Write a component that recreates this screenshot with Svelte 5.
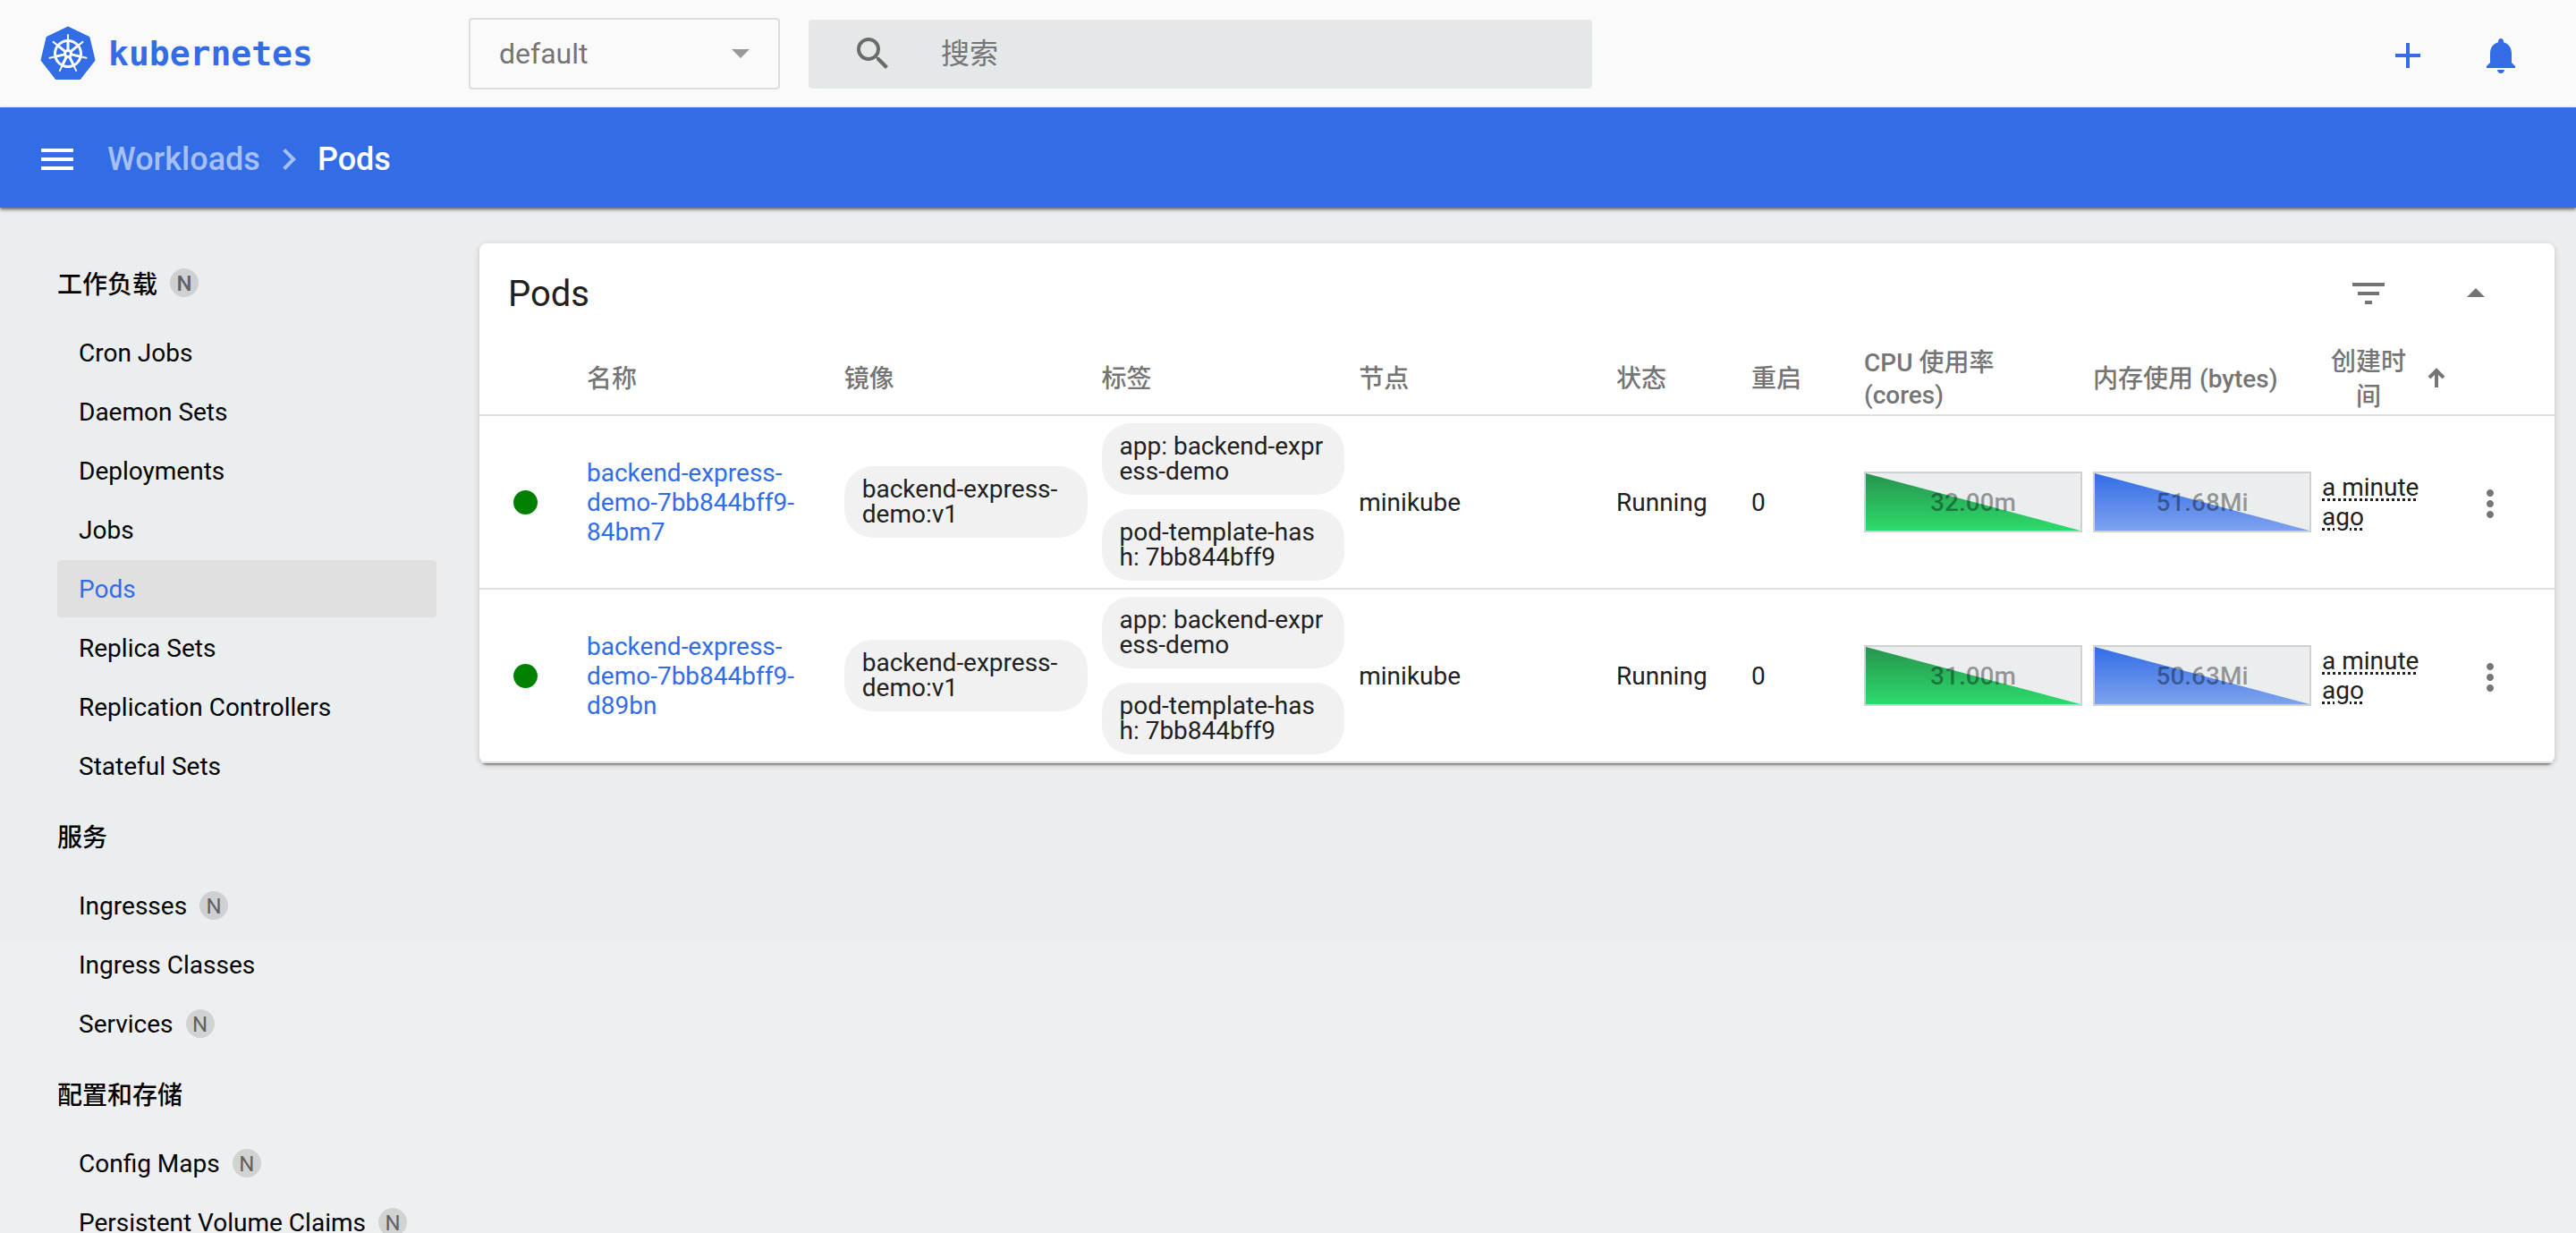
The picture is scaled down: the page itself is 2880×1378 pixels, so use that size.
<script>
  const groups = [
    {
      title: '工作负载',
      badge: true,
      items: [
        { name: 'Cron Jobs' },
        { name: 'Daemon Sets' },
        { name: 'Deployments' },
        { name: 'Jobs' },
        { name: 'Pods', active: true },
        { name: 'Replica Sets' },
        { name: 'Replication Controllers' },
        { name: 'Stateful Sets' },
      ],
    },
    {
      title: '服务',
      items: [
        { name: 'Ingresses', badge: true },
        { name: 'Ingress Classes' },
        { name: 'Services', badge: true },
      ],
    },
    {
      title: '配置和存储',
      items: [
        { name: 'Config Maps', badge: true },
        { name: 'Persistent Volume Claims', badge: true },
      ],
    },
  ];

  const pods = [
    { name: 'backend-express-demo-7bb844bff9-84bm7', cpu: '32.00m', memory: '51.68Mi' },
    { name: 'backend-express-demo-7bb844bff9-d89bn', cpu: '31.00m', memory: '50.63Mi' },
  ];
  const labels = ['app: backend-express-demo', 'pod-template-hash: 7bb844bff9'];

  const spokes = [0, 1, 2, 3, 4, 5, 6].map((i) => (i * 360) / 7);
</script>

{#snippet spark(value, kind)}
  <div class="spark">
    <svg viewBox="0 0 240 64" preserveAspectRatio="none" aria-hidden="true">
      <defs>
        <linearGradient id="fill-{kind}" x1="0" y1="0" x2="0" y2="1">
          <stop offset="0" class="{kind}-top" />
          <stop offset="1" class="{kind}-bottom" />
        </linearGradient>
      </defs>
      <polygon points="0,0 240,64 0,64" fill="url(#fill-{kind})" />
    </svg>
    <span>{value}</span>
  </div>
{/snippet}

<div class="page">
  <header class="topbar">
    <a class="brand" href="#home" aria-label="kubernetes">
      <svg class="wheel" viewBox="-32 -32 64 64" aria-hidden="true">
        <path
          d="M0 -29 L23 -18 L29 7 L13 27.5 L-13 27.5 L-29 7 L-23 -18 Z"
          fill="#326de6"
          stroke="#fff"
          stroke-width="6"
          stroke-linejoin="round"
        />
        <path
          d="M0 -29 L23 -18 L29 7 L13 27.5 L-13 27.5 L-29 7 L-23 -18 Z"
          fill="#326de6"
          stroke="#326de6"
          stroke-width="3"
          stroke-linejoin="round"
        />
        <g fill="none" stroke="#fff" stroke-linecap="round">
          <circle r="14.5" stroke-width="3" />
          {#each spokes as angle}
            <g transform="rotate({angle})">
              <path d="M0 -4V-21" stroke-width="2" />
              <path d="M0 -5V-13" stroke-width="3" />
            </g>
          {/each}
        </g>
        <circle r="5" fill="#fff" />
        <circle r="2" fill="#326de6" />
      </svg>
      <span>kubernetes</span>
    </a>

    <div class="namespace">
      <select aria-label="Namespace">
        <option>default</option>
      </select>
      <svg viewBox="0 0 20 10" aria-hidden="true"><path d="M0 0h20L10 10z" /></svg>
    </div>

    <label class="search">
      <svg class="icon" viewBox="0 0 24 24" aria-hidden="true">
        <path d="M15.5 14h-.79l-.28-.27A6.471 6.471 0 0 0 16 9.5 6.5 6.5 0 1 0 9.5 16c1.61 0 3.09-.59 4.23-1.57l.27.28v.79l5 4.99L20.49 19l-4.99-5zm-6 0C7.01 14 5 11.99 5 9.5S7.01 5 9.5 5 14 7.01 14 9.5 11.99 14 9.5 14z" />
      </svg>
      <input type="text" placeholder="搜索" aria-label="搜索" />
    </label>

    <div class="tools">
      <button aria-label="Create">
        <svg class="icon" viewBox="0 0 24 24"><path d="M19 13h-6v6h-2v-6H5v-2h6V5h2v6h6v2z" /></svg>
      </button>
      <button aria-label="Notifications">
        <svg class="icon" viewBox="0 0 24 24">
          <path d="M12 22c1.1 0 2-.9 2-2h-4c0 1.1.89 2 2 2zm6-6v-5c0-3.07-1.64-5.64-4.5-6.32V4c0-.83-.67-1.5-1.5-1.5s-1.5.67-1.5 1.5v.68C7.63 5.36 6 7.92 6 11v5l-2 2v1h16v-1l-2-2z" />
        </svg>
      </button>
    </div>
  </header>

  <nav class="crumbs" aria-label="Breadcrumb">
    <button aria-label="Menu">
      <svg class="icon" viewBox="0 0 24 24"><path d="M3 18h18v-2H3v2zm0-5h18v-2H3v2zm0-7v2h18V6H3z" /></svg>
    </button>
    <a href="#workloads">Workloads</a>
    <svg class="icon chevron" viewBox="0 0 24 24" aria-hidden="true">
      <path d="M10 6L8.59 7.41 13.17 12l-4.58 4.59L10 18l6-6z" />
    </svg>
    <strong>Pods</strong>
  </nav>

  <div class="body">
    <nav class="sidebar" aria-label="Resources">
      {#each groups as group}
        <a class="group" href="#group">
          {group.title}
          {#if group.badge}<span class="badge">N</span>{/if}
        </a>
        {#each group.items as item}
          <a class="item" class:active={item.active} href="#resource">
            {item.name}
            {#if item.badge}<span class="badge">N</span>{/if}
          </a>
        {/each}
      {/each}
    </nav>

    <main>
      <section class="card">
        <div class="card-head">
          <h1>Pods</h1>
          <button aria-label="Filter">
            <svg class="icon" viewBox="0 0 24 24"><path d="M10 18h4v-2h-4v2zM3 6v2h18V6H3zm3 7h12v-2H6v2z" /></svg>
          </button>
          <button aria-label="Collapse">
            <svg class="icon" viewBox="0 0 24 24"><path d="M7 14l5-5 5 5z" /></svg>
          </button>
        </div>
        <table>
          <colgroup>
            <col class="c-dot" />
            <col />
            <col />
            <col />
            <col />
            <col class="c-status" />
            <col class="c-restarts" />
            <col class="c-metric" />
            <col class="c-metric" />
            <col class="c-created" />
            <col class="c-menu" />
          </colgroup>
          <thead>
            <tr>
              <th></th>
              <th>名称</th>
              <th>镜像</th>
              <th>标签</th>
              <th>节点</th>
              <th>状态</th>
              <th>重启</th>
              <th>CPU 使用率 (cores)</th>
              <th>内存使用 (bytes)</th>
              <th>
                <button class="sort">
                  <span>创建时间</span>
                  <svg viewBox="0 0 20 26" aria-hidden="true">
                    <path d="M10 22V3M2 11L10 3L18 11" />
                  </svg>
                </button>
              </th>
              <th></th>
            </tr>
          </thead>
          <tbody>
            {#each pods as pod}
              <tr>
                <td class="dot-cell"><span class="dot"></span></td>
                <td><a class="pod" href="#pod">{pod.name}</a></td>
                <td><div class="chip">backend-express-demo:v1</div></td>
                <td>
                  <div class="chips">
                    {#each labels as label}<div class="chip breaking">{label}</div>{/each}
                  </div>
                </td>
                <td>minikube</td>
                <td>Running</td>
                <td>0</td>
                <td class="metric">{@render spark(pod.cpu, 'cpu')}</td>
                <td class="metric">{@render spark(pod.memory, 'memory')}</td>
                <td><span class="ago">a minute ago</span></td>
                <td class="menu-cell">
                  <button aria-label="Actions">
                    <svg class="icon" viewBox="0 0 24 24">
                      <path d="M12 8c1.1 0 2-.9 2-2s-.9-2-2-2-2 .9-2 2 .9 2 2 2zm0 2c-1.1 0-2 .9-2 2s.9 2 2 2 2-.9 2-2-.9-2-2-2zm0 6c-1.1 0-2 .9-2 2s.9 2 2 2 2-.9 2-2-.9-2-2-2z" />
                    </svg>
                  </button>
                </td>
              </tr>
            {/each}
          </tbody>
        </table>
      </section>
    </main>
  </div>
</div>

<style>
  :global(body) {
    margin: 0;
    overflow: hidden;
  }

  .page {
    height: 100vh;
    overflow: hidden;
    display: flex;
    flex-direction: column;
    background: linear-gradient(#eaeeef 1052px, #eeeff0 1052px);
    color: #212121;
    font-family: Roboto, 'Noto Sans CJK SC', sans-serif;
    font-size: 28px;
  }

  button {
    display: flex;
    padding: 0;
    border: 0;
    background: none;
    color: inherit;
    font: inherit;
    cursor: pointer;
  }

  a {
    color: inherit;
    text-decoration: none;
  }

  .icon {
    display: block;
    flex: none;
    width: 48px;
    height: 48px;
    fill: currentColor;
  }

  .topbar {
    flex: none;
    display: flex;
    align-items: center;
    height: 120px;
    padding: 0 60px 0 44px;
    box-sizing: border-box;
    background: #fafafa;
  }

  .brand {
    display: flex;
    align-items: center;
    gap: 13px;
    width: 480px;
    color: #326de6;
    font: bold 38px/44px 'DejaVu Sans Mono', monospace;
  }

  .wheel {
    width: 64px;
    height: 64px;
  }

  .namespace {
    display: grid;
    align-items: center;
    width: 348px;
    height: 80px;
  }

  .namespace select,
  .namespace svg {
    grid-area: 1 / 1;
  }

  .namespace select {
    appearance: none;
    width: 100%;
    height: 100%;
    padding: 0 32px;
    border: 2px solid #dddddd;
    border-radius: 4px;
    background: transparent;
    color: #757575;
    font: 32px Roboto, sans-serif;
  }

  .namespace svg {
    justify-self: end;
    width: 20px;
    height: 10px;
    margin-right: 34px;
    fill: #999999;
    pointer-events: none;
  }

  .search {
    display: flex;
    align-items: center;
    width: 876px;
    height: 77px;
    margin-left: 32px;
    padding: 0 48px;
    box-sizing: border-box;
    border-radius: 4px;
    background: #e4e8e8;
    color: #6b6b6b;
  }

  .search input {
    flex: 1;
    min-width: 0;
    margin-left: 52px;
    padding: 0;
    border: 0;
    outline: 0;
    background: none;
    font: 32px Roboto, 'Noto Sans CJK SC', sans-serif;
  }

  .search input::placeholder {
    color: #757575;
  }

  .tools {
    display: flex;
    gap: 56px;
    margin-left: auto;
    padding-top: 4px;
    color: #326de6;
  }

  .crumbs {
    flex: none;
    display: flex;
    align-items: center;
    height: 112px;
    padding: 4px 40px 0;
    box-sizing: border-box;
    background: #326de6;
    box-shadow: 0 2px 4px rgba(0, 0, 0, 0.6);
    color: #fff;
    font-size: 36px;
    font-weight: 500;
    z-index: 1;
  }

  .crumbs a {
    margin-left: 32px;
    color: #a6bff4;
  }

  .crumbs .chevron {
    margin: 0 8px;
    color: #a6bff4;
  }

  .crumbs strong {
    font-weight: 500;
  }

  .body {
    flex: 1;
    min-height: 0;
    display: flex;
  }

  .sidebar {
    flex: none;
    width: 424px;
    padding: 40px 48px 0 64px;
    color: #000;
  }

  .group,
  .item {
    display: flex;
    align-items: center;
    gap: 14px;
    margin-bottom: 2px;
    white-space: nowrap;
  }

  .group {
    height: 88px;
    font-weight: 500;
  }

  .item {
    height: 64px;
    padding: 0 24px;
    border-radius: 4px;
  }

  .item.active {
    background: #e0e0e0;
    color: #326de6;
  }

  .badge {
    width: 32px;
    height: 32px;
    border-radius: 50%;
    background: rgba(0, 0, 0, 0.12);
    color: #616161;
    font-size: 24px;
    line-height: 34px;
    text-align: center;
  }

  main {
    flex: 1;
    min-width: 0;
    padding: 40px 24px 0 0;
  }

  .card {
    border-radius: 8px;
    background: #fff;
    box-shadow:
      0 4px 2px -2px rgba(0, 0, 0, 0.35),
      0 2px 6px rgba(0, 0, 0, 0.2);
  }

  .card-head {
    display: flex;
    align-items: center;
    gap: 72px;
    height: 112px;
    padding: 0 64px 0 32px;
    box-sizing: border-box;
    color: #757575;
  }

  h1 {
    margin: 0 auto 0 0;
    color: #212121;
    font-size: 40px;
    font-weight: 400;
  }

  table {
    width: 100%;
    table-layout: fixed;
    border-collapse: separate;
    border-spacing: 0;
  }

  .c-dot {
    width: 120px;
  }

  .c-status {
    width: 151px;
  }

  .c-restarts {
    width: 126px;
  }

  .c-metric {
    width: 256px;
  }

  .c-created {
    width: 148px;
  }

  .c-menu {
    width: 112px;
  }

  th,
  td {
    padding: 0 16px 0 0;
    border-bottom: 2px solid #e0e0e0;
    text-align: left;
    vertical-align: middle;
    line-height: 33px;
  }

  th {
    height: 79px;
    color: #757575;
    font-weight: 500;
    line-height: 36px;
  }

  td {
    height: 192px;
  }

  .sort {
    align-items: center;
    gap: 24px;
    padding-left: 10px;
    line-height: 39px;
  }

  .sort span {
    width: 84px;
    text-align: center;
  }

  .sort svg {
    flex: none;
    width: 20px;
    height: 26px;
    fill: none;
    stroke: #757575;
    stroke-width: 4;
  }

  .dot-cell {
    padding-left: 38px;
  }

  .dot {
    display: block;
    width: 27px;
    height: 27px;
    border-radius: 50%;
    background: #008000;
  }

  .pod {
    color: #326de6;
  }

  .chips {
    display: grid;
    gap: 16px;
  }

  .chip {
    padding: 12px 20px;
    border-radius: 32px;
    background: #f1f1f1;
    line-height: 28px;
  }

  .breaking {
    word-break: break-all;
  }

  .metric {
    padding-right: 12px;
  }

  .spark {
    display: grid;
    height: 64px;
    border: 2px solid #ced2d2;
    background: #eaeeef;
    color: rgba(0, 0, 0, 0.38);
    font-weight: 500;
  }

  .spark svg,
  .spark span {
    grid-area: 1 / 1;
  }

  .spark svg {
    width: 100%;
    height: 64px;
  }

  .spark span {
    place-self: center;
    z-index: 1;
  }

  .cpu-top {
    stop-color: #28934f;
  }

  .cpu-bottom {
    stop-color: #2cdb6b;
  }

  .memory-top {
    stop-color: #326de6;
  }

  .memory-bottom {
    stop-color: #7ea2ee;
  }

  .ago {
    text-decoration: underline dotted 3px;
    text-underline-offset: 3px;
  }

  .menu-cell {
    padding: 4px 48px 0 16px;
    color: #757575;
    height: 188px;
  }
</style>
